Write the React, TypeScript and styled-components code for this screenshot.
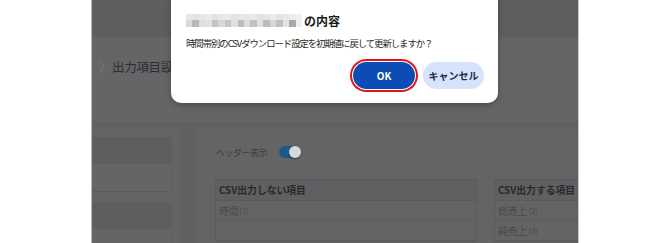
import React from "react";
import styled, { createGlobalStyle } from "styled-components";

const GlobalStyle = createGlobalStyle`
  html, body { margin: 0; padding: 0; background: #ffffff; }
  body { font-family: "Noto Sans CJK JP", "Noto Sans", sans-serif; }
  * { box-sizing: border-box; }
`;

const Page = styled.div`
  position: relative;
  width: 670px;
  height: 243px;
  overflow: hidden;
  background: #ffffff;
  padding-left: 91px;
`;

const Frame = styled.div`
  width: 488px;
  height: 243px;
  border-left: 1px solid #b9b9bb;
  border-right: 1px solid #c4c4c6;
  background: #606163;
  display: flex;
  flex-direction: column;
  overflow: hidden;
`;

const HeaderBar = styled.div`
  height: 37px;
  flex: none;
  background: #5d5e60;
`;

const CrumbBar = styled.div`
  height: 85px;
  flex: none;
  background: #646567;
  display: flex;
  align-items: center;
  padding: 0 0 26px 7px;
  gap: 7px;
`;

const CrumbText = styled.span`
  font-size: 12.5px;
  color: #2e2f31;
  white-space: nowrap;
  letter-spacing: -0.3px;
`;

const Content = styled.div`
  flex: 1;
  display: flex;
  padding-top: 7px;
  gap: 17px;
`;

const SidePanel = styled.div`
  width: 88px;
  flex: none;
  background: #646465;
  padding: 8px 8px 0 0;
  display: flex;
  flex-direction: column;
  gap: 10px;
`;

const SideGroup = styled.div`
  display: flex;
  flex-direction: column;
`;

const SideHead = styled.div`
  height: 27px;
  background: #5e5e5f;
`;

const SideRow = styled.div`
  height: 28px;
  background: #656566;
  border-bottom: 1px solid #5b5b5c;
  border-right: 1px solid #5e5e5f;
`;

const MainPanel = styled.div`
  flex: 1;
  background: #646465;
  padding: 17px 0 0 18px;
  display: flex;
  flex-direction: column;
`;

const ToggleRow = styled.div`
  display: flex;
  align-items: center;
  height: 12px;
  gap: 12px;
  padding-left: 1px;
`;

const ToggleLabel = styled.span`
  font-size: 9px;
  color: #3d3e40;
  letter-spacing: -0.5px;
`;

const Toggle = styled.div`
  position: relative;
  width: 21px;
  height: 12px;
  border-radius: 6px;
  background: #175a8c;
`;

const Knob = styled.span`
  position: absolute;
  right: -1px;
  top: 0;
  width: 12px;
  height: 12px;
  border-radius: 50%;
  background: #d5d9de;
  box-shadow: 0 1px 2px rgba(0, 0, 0, 0.4);
`;

const Tables = styled.div`
  display: flex;
  gap: 17px;
  margin-top: 21px;
`;

const Table = styled.div<{ $w?: number }>`
  ${(p) => (p.$w ? `width: ${p.$w}px; flex: none;` : "flex: 1;")}
  border: 1px solid #5a5b5c;
  border-right-width: ${(p) => (p.$w ? "1px" : "0")};
  display: flex;
  flex-direction: column;
`;

const TableHead = styled.div`
  height: 21px;
  background: #5f6062;
  border-bottom: 1px solid #5a5b5c;
  display: flex;
  align-items: center;
  padding-left: 3px;
  font-size: 9.8px;
  font-weight: 700;
  color: #28292b;
  white-space: nowrap;
`;

const TableRow = styled.div`
  height: 20px;
  border-bottom: 1px solid #5b5c5d;
  display: flex;
  align-items: center;
  padding-left: 3px;
  font-size: 9.8px;
  color: #48494b;
  white-space: nowrap;
`;

const Count = styled.span`
  font-size: 7.5px;
  margin-left: 1px;
`;

const Dialog = styled.div`
  position: absolute;
  left: 171px;
  top: -12px;
  width: 327px;
  height: 115px;
  background: #ffffff;
  border-radius: 10px;
  box-shadow: 0 2px 6px rgba(0, 0, 0, 0.25);
  padding: 24px 14px 0 15px;
  display: flex;
  flex-direction: column;
`;

const TitleRow = styled.div`
  display: flex;
  align-items: center;
  height: 16px;
  gap: 2px;
`;

const Mosaic = styled.div`
  width: 116px;
  height: 13px;
  display: grid;
  grid-template-columns: repeat(18, 1fr);
  grid-template-rows: repeat(2, 1fr);
`;

const Tile = styled.span<{ $c: string }>`
  background: ${(p) => p.$c};
`;

const TitleText = styled.span`
  font-size: 12px;
  font-weight: 700;
  color: #1a1a1a;
`;

const Message = styled.p`
  margin: 8px 0 0;
  height: 14px;
  line-height: 14px;
  font-size: 9.4px;
  color: #1f1f1f;
  letter-spacing: -1.05px;
  white-space: nowrap;
`;

const Buttons = styled.div`
  display: flex;
  justify-content: flex-end;
  gap: 5px;
  margin-top: 12px;
`;

const Button = styled.button<{ $primary?: boolean }>`
  height: 27px;
  width: ${(p) => (p.$primary ? "62px" : "61px")};
  border: none;
  border-radius: 14px;
  font-family: inherit;
  font-size: 10px;
  font-weight: 700;
  padding: 0;
  cursor: pointer;
  background: ${(p) => (p.$primary ? "#0b4db5" : "#d5e3fb")};
  color: ${(p) => (p.$primary ? "#ffffff" : "#1b2a4c")};
  box-shadow: ${(p) =>
    p.$primary ? "0 0 0 1px #ffffff, 0 0 0 3px #e2141c" : "none"};
  margin-right: ${(p) => (p.$primary ? "3px" : "0")};
`;

const top = [
  "#e9e9e9", "#e4e4e4", "#e6e6e6", "#eaeaea", "#e2e2e2", "#e7e7e7",
  "#ebebeb", "#e3e3e3", "#e8e8e8", "#e5e5e5", "#e9e9e9", "#e1e1e1",
  "#e6e6e6", "#eaeaea", "#e4e4e4", "#e8e8e8", "#ececec", "#f0f0f0",
];
const bottom = [
  "#dadada", "#b9b9b9", "#dedede", "#e2e2e2", "#c4c4c4", "#d8d8d8",
  "#c6c6c6", "#e0e0e0", "#bdbdbd", "#dcdcdc", "#c2c2c2", "#e1e1e1",
  "#bcbcbc", "#d6d6d6", "#c0c0c0", "#e3e3e3", "#a9a9a9", "#efefef",
];

const Chevron = () => (
  <svg width="6" height="13" viewBox="0 0 6 13" fill="none">
    <path d="M0.5 0.5 L5.5 6.5 L0.5 12.5" stroke="#7a7b7e" strokeWidth="1" />
  </svg>
);

export default function App() {
  return (
    <>
      <GlobalStyle />
      <Page>
        <Frame>
          <HeaderBar />
          <CrumbBar>
            <Chevron />
            <CrumbText>出力項目設定</CrumbText>
          </CrumbBar>
          <Content>
            <SidePanel>
              <SideGroup>
                <SideHead />
                <SideRow />
              </SideGroup>
              <SideGroup>
                <SideHead />
                <SideRow />
              </SideGroup>
            </SidePanel>
            <MainPanel>
              <ToggleRow>
                <ToggleLabel>ヘッダー表示</ToggleLabel>
                <Toggle>
                  <Knob />
                </Toggle>
              </ToggleRow>
              <Tables>
                <Table $w={262}>
                  <TableHead>CSV出力しない項目</TableHead>
                  <TableRow>
                    時間<Count>(1)</Count>
                  </TableRow>
                  <TableRow />
                </Table>
                <Table>
                  <TableHead>CSV出力する項目</TableHead>
                  <TableRow>
                    総売上<Count>(2)</Count>
                  </TableRow>
                  <TableRow>
                    純売上<Count>(3)</Count>
                  </TableRow>
                </Table>
              </Tables>
            </MainPanel>
          </Content>
        </Frame>
        <Dialog>
          <TitleRow>
            <Mosaic>
              {top.map((c, i) => (
                <Tile key={"t" + i} $c={c} />
              ))}
              {bottom.map((c, i) => (
                <Tile key={"b" + i} $c={c} />
              ))}
            </Mosaic>
            <TitleText>の内容</TitleText>
          </TitleRow>
          <Message>時間帯別のCSVダウンロード設定を初期値に戻して更新しますか？</Message>
          <Buttons>
            <Button $primary>OK</Button>
            <Button>キャンセル</Button>
          </Buttons>
        </Dialog>
      </Page>
    </>
  );
}
